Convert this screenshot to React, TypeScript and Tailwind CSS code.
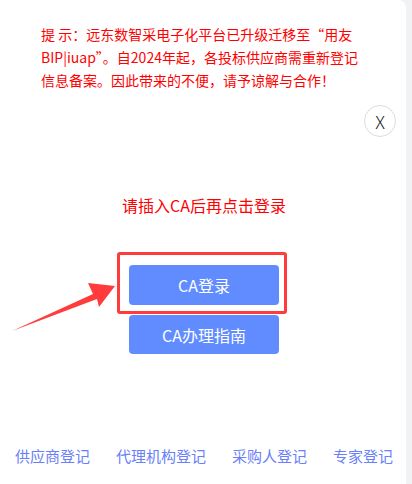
export default function App() {
  const links = ['供应商登记', '代理机构登记', '采购人登记', '专家登记'];
  return (
    <div className="w-[412px] h-[484px] bg-[#f1f2f4] flex overflow-hidden" style={{ fontFamily: '"Noto Sans CJK SC", "Noto Sans", sans-serif' }}>
      <div className="relative w-[406px] h-[484px] bg-white rounded-tr-[8px] flex flex-col">
        <div className="pl-[41px] pt-[23px] w-[375px] text-[14px] leading-[23px] text-[#ff0000]">
          提{'\u00a0'}示：远东数智采电子化平台已升级迁移至“用友<br />
          BIP|iuap”。自2024年起，各投标供应商需重新登记<br />
          信息备案。因此带来的不便，请予谅解与合作！
        </div>

        <div className="flex justify-end pr-[10px] mt-[13px]">
          <button className="w-[32px] h-[32px] rounded-full border border-[#dcdcdc] flex items-center justify-center text-[18px] font-light text-[#222] leading-none">
            X
          </button>
        </div>

        <div className="mt-[56px] text-center text-[16px] leading-[24px] text-[#ff0000] pl-[2px]">
          请插入CA后再点击登录
        </div>

        <div className="mt-[48px] flex flex-col items-center gap-[10px] pl-[2px]">
          <div className="relative">
            <button className="w-[150px] h-[40px] rounded-[4px] bg-[#608cff] text-white text-[16px]">
              CA登录
            </button>
            <div className="absolute left-[-12px] top-[-13px] right-[-8px] bottom-[-9px] border-[3px] border-[#ff3b3b] rounded-[3px]" />
          </div>
          <button className="w-[150px] h-[39px] rounded-[4px] bg-[#608cff] text-white text-[16px]">
            CA办理指南
          </button>
        </div>

        <div className="mt-auto flex justify-between pl-[15px] pr-[13px] pb-[17px] text-[15px] leading-[22px] text-[#6a80fa]">
          {links.map((l) => (
            <span key={l}>{l}</span>
          ))}
        </div>

        <svg className="absolute left-0 top-0" width="130" height="340" viewBox="0 0 130 340">
          <polygon points="12,331 93,294 88,283 115,286 99,307 97,299" fill="#ff3b3b" />
        </svg>
      </div>
    </div>
  );
}
